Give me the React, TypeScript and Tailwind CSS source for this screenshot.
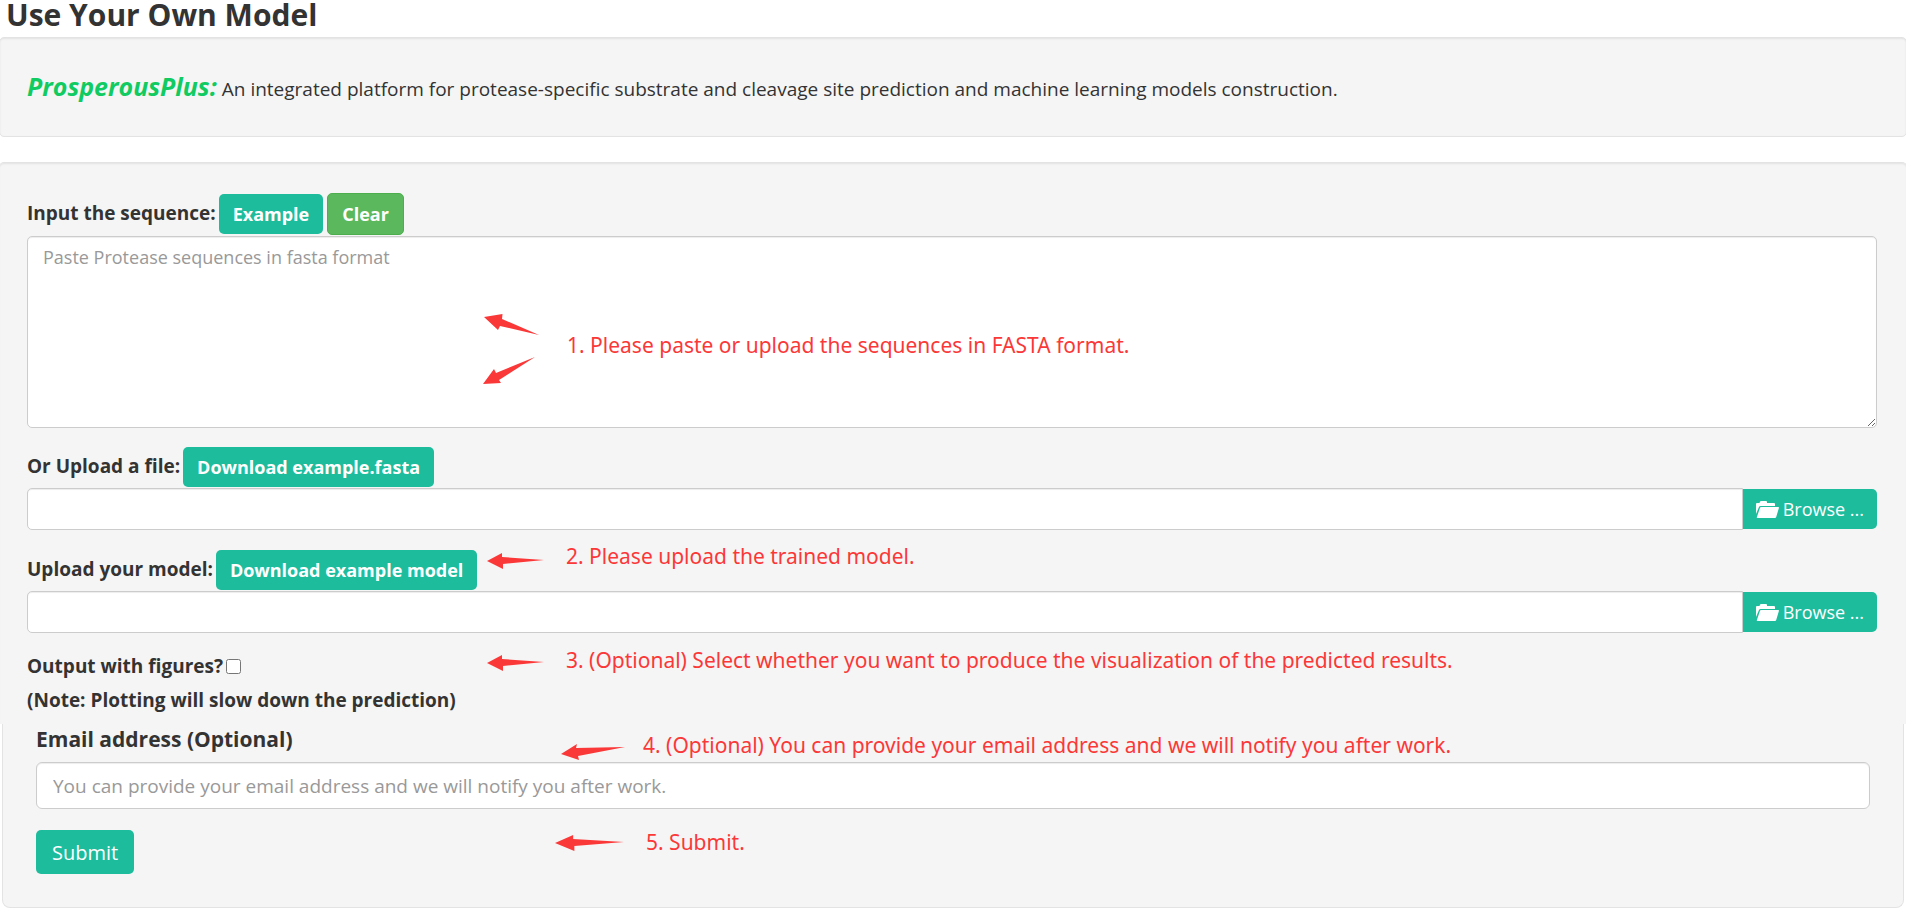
import React, { useState } from 'react';

const BTN = 'h-10 px-[14px] rounded-[5px] bg-[#1dbc9d] text-[18px] text-white font-bold hover:bg-[#18a689]';
const FIELD = 'bg-white border border-[#cccccc] shadow-[inset_0_1px_1px_rgba(0,0,0,0.075)] outline-none placeholder:text-[#999999]';

export default function App() {
  const [sequence, setSequence] = useState('');
  const [figures, setFigures] = useState(false);
  const [email, setEmail] = useState('');

  return (
    <div className="w-full overflow-x-hidden bg-white pb-px font-['Open_Sans',sans-serif] text-[19px] leading-[27px] text-[#333333]">
      <h1 className="h-[37px] pl-[6px] text-[30px] leading-[30px] font-bold">Use Your Own Model</h1>

      <section className="-mx-px flex h-[100px] items-center rounded-[5px] border border-[#e3e3e3] bg-[#f5f5f5] px-[27px] pt-[2px] shadow-[inset_0_1px_2px_rgba(0,0,0,0.08)]">
        <p>
          <em className="text-[25px] font-bold text-[#10cb61]">ProsperousPlus:</em>{' '}
          An integrated platform for protease-specific substrate and cleavage site prediction and machine learning models construction.
        </p>
      </section>

      <form onSubmit={(e) => e.preventDefault()} className="mt-[25px]">
        {/* Sequence and model input */}
        <section className="-mx-px h-[562px] rounded-t-[5px] border border-b-0 border-[#e3e3e3] bg-[#f5f5f5] pt-[30px] pr-[29px] pl-[27px] shadow-[inset_0_2px_2px_-1px_rgba(0,0,0,0.08)]">
          <div className="flex items-center gap-[3px]">
            <label htmlFor="sequence" className="pb-[2px] font-bold">Input the sequence:</label>
            <div className="flex items-center gap-1">
              <button type="button" className={BTN} onClick={() => setSequence('>sp|P00001\nMKTAYIAKQR')}>Example</button>
              <button
                type="button"
                onClick={() => setSequence('')}
                className="h-[42px] rounded-[5px] border border-[#4cae4c] bg-[#5cb85c] px-[14px] text-[18px] font-bold text-white"
              >
                Clear
              </button>
            </div>
          </div>

          <div className="relative mt-px">
            <textarea
              id="sequence"
              value={sequence}
              onChange={(e) => setSequence(e.target.value)}
              placeholder="Paste Protease sequences in fasta format"
              className={`block h-[192px] w-full rounded-[5px] px-[15px] py-[7px] text-[18px] ${FIELD}`}
            />
            <div className="pointer-events-none absolute top-[78px] left-[456px] flex items-start gap-[28px]">
              <svg width="56" height="70" viewBox="0 0 56 70" fill="#fb3838">
                <path d="M1 3 19.500 0 19 5 56 21 17 12 15 16Z" />
                <path d="M0 70 11 55 13 59 52 43 16 66 18 69Z" />
              </svg>
              <Note className="mt-[18px]">1. Please paste or upload the sequences in FASTA format.</Note>
            </div>
          </div>

          <div className="mt-[19px]">
            <FileRow id="fasta" label="Or Upload a file:" button="Download example.fasta" />
          </div>
          <div className="relative mt-5">
            <FileRow id="model" label="Upload your model:" button="Download example model" />
            <div className="pointer-events-none absolute -top-[7px] left-[460px] flex items-start gap-[22px]">
              <Arrow className="mt-[10px]" />
              <Note>2. Please upload the trained model.</Note>
            </div>
          </div>

          <div className="relative mt-4 font-bold leading-[34px]">
            <div className="flex items-center gap-[3px]">
              <label htmlFor="figures">Output with figures?</label>
              <input
                id="figures"
                type="checkbox"
                checked={figures}
                onChange={(e) => setFigures(e.target.checked)}
                className="size-[15px]"
              />
            </div>
            <p>(Note: Plotting will slow down the prediction)</p>
            <div className="pointer-events-none absolute -top-[2px] left-[460px] flex items-start gap-[22px]">
              <Arrow className="mt-[8px]" />
              <Note>3. (Optional) Select whether you want to produce the visualization of the predicted results.</Note>
            </div>
          </div>
        </section>

        {/* Contact and submit */}
        <section className="mx-[2px] rounded-b-[8px] border border-t-0 border-[#e3e3e3] bg-[#f5f5f5] px-[33px] pb-[33px]">
          <div className="relative">
            <label htmlFor="email" className="block h-[38px] text-[21px] leading-[30px] font-bold">Email address (Optional)</label>
            <input
              id="email"
              type="email"
              value={email}
              onChange={(e) => setEmail(e.target.value)}
              placeholder="You can provide your email address and we will notify you after work."
              className={`block h-[47px] w-full rounded-[6px] px-4 text-[19px] ${FIELD}`}
            />
            <div className="pointer-events-none absolute top-[8px] left-[525px] flex items-start gap-[18px]">
              <Arrow tilted className="mt-[12px]" />
              <Note>4. (Optional) You can provide your email address and we will notify you after work.</Note>
            </div>
          </div>
          <div className="relative mt-[21px]">
            <button type="submit" className="h-[44px] rounded-[5px] bg-[#1dbc9d] px-4 text-[20px] text-white hover:bg-[#18a689]">
              Submit
            </button>
            <div className="pointer-events-none absolute -top-px left-[519px] flex items-start gap-[22px]">
              <Arrow long className="mt-[6px]" />
              <Note>5. Submit.</Note>
            </div>
          </div>
        </section>
      </form>
    </div>
  );
}

const FileRow = ({ id, label, button }: { id: string; label: string; button: string }) => (
  <div>
    <div className="flex items-center gap-[3px]">
      <label htmlFor={id} className="pb-[2px] font-bold">{label}</label>
      <button type="button" className={BTN}>{button}</button>
    </div>
    <div className="mt-px flex items-center">
      <input id={id} type="text" readOnly className={`h-[42px] min-w-0 flex-1 rounded-l-[5px] px-4 ${FIELD}`} />
      <button type="button" className="flex h-10 items-center gap-1 rounded-r-[5px] bg-[#1dbc9d] px-[13px] text-[18px] text-white">
        <FolderOpen />
        Browse ...
      </button>
    </div>
  </div>
);

const Note = ({ children, className = '' }: { children: React.ReactNode; className?: string }) => (
  <span className={`font-['Noto_Sans',sans-serif] text-[21px] leading-[27px] font-normal whitespace-nowrap text-[#fb3838] ${className}`}>
    {children}
  </span>
);

const Arrow = ({ tilted, long, className = '' }: { tilted?: boolean; long?: boolean; className?: string }) => {
  if (tilted) {
    return (
      <svg width="64" height="16" viewBox="0 0 64 16" fill="#fb3838" className={className}>
        <path d="M0 10 16 0 15 4 64 3 17 12 18 16Z" />
      </svg>
    );
  }
  return (
    <svg width={long ? 69 : 57} height="16" viewBox="0 0 57 16" preserveAspectRatio="none" fill="#fb3838" className={className}>
      <path d="M0 8 15 0 15 4 57 7 16 11 16 16Z" />
    </svg>
  );
};

const FolderOpen = () => (
  <svg width="23" height="17" viewBox="0 0 23 17" fill="currentColor">
    <path d="M0 3Q0 2 1 2H3.500L4 .8Q4.300 0 5 0H10Q11 0 11 1V2H18Q19 2 19 3V5H4.500Q3.500 5 3 6L0 13Z" />
    <path d="M5 6H22.300Q23.200 6 22.900 7L20.200 16Q19.900 17 19 17H1.500Q.5 17 .9 16L4 6.700Q4.300 6 5 6Z" />
  </svg>
);
